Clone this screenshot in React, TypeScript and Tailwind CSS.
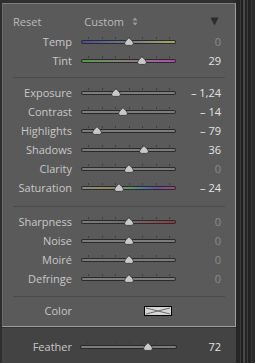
import React from "react";

type Row = {
  label: string;
  pos: number;
  value: string;
  dim?: boolean;
  fill?: string;
};

const TICKS = [7, 20.5, 34, 47.5, 61, 74.5, 88];

function Thumb({ left }: { left: number }) {
  return (
    <svg
      className="absolute top-[5px]"
      style={{ left: left - 5 }}
      width="10"
      height="9"
      viewBox="0 0 10 9"
    >
      <path
        d="M5 0.6 C6 2.2 9.4 4.4 9.4 6.4 Q9.4 8.4 7.4 8.4 H2.6 Q0.6 8.4 0.6 6.4 C0.6 4.4 4 2.2 5 0.6 Z"
        fill="#c9c9c9"
        stroke="#303030"
        strokeWidth="0.8"
      />
    </svg>
  );
}

function Slider({ pos, fill, width = 95 }: { pos: number; fill?: string; width?: number }) {
  return (
    <div className="relative h-[19px] shrink-0" style={{ width }}>
      {TICKS.map((t) => (
        <div key={t} className="absolute top-[5px] h-[2px] w-[1px] bg-[#3c3c3c]" style={{ left: (t * width) / 95 }} />
      ))}
      <div className="absolute left-0 right-0 top-[8px] h-[4px] rounded-full bg-[#2a2a2a] px-[1px] pt-[1px]">
        <div className={`h-[2px] rounded-full ${fill ?? "bg-[#7c7c7c]"}`} />
      </div>
      <Thumb left={pos} />
    </div>
  );
}

function SliderRow({ r }: { r: Row }) {
  return (
    <div className="flex h-[19px] items-center">
      <div className="w-[69px] shrink-0 text-right text-[11px] leading-none text-[#c8c8c8]">{r.label}</div>
      <div className="ml-[9px]">
        <Slider pos={r.pos} fill={r.fill} />
      </div>
      <div
        className={`w-[45px] shrink-0 text-right text-[11px] leading-none ${
          r.dim ? "text-[#8c8c8c]" : "text-[#e4e4e4]"
        }`}
      >
        {r.value}
      </div>
    </div>
  );
}

function Divider() {
  return <div className="ml-[10px] h-[1px] w-[212px] bg-[#4a4a4a]" />;
}

const wb: Row[] = [
  { label: "Temp", pos: 48, value: "0", dim: true, fill: "bg-linear-to-r from-[#4a4a9a] to-[#a8a85c]" },
  { label: "Tint", pos: 61, value: "29", fill: "bg-linear-to-r from-[#4f9a45] to-[#ae48ae]" },
];

const tone: Row[] = [
  { label: "Exposure", pos: 35, value: "\u2013 1,24" },
  { label: "Contrast", pos: 42, value: "\u2013 14" },
  { label: "Highlights", pos: 16, value: "\u2013 79" },
  { label: "Shadows", pos: 63, value: "36" },
  { label: "Clarity", pos: 48, value: "0", dim: true },
  {
    label: "Saturation",
    pos: 38,
    value: "\u2013 24",
    fill: "bg-[linear-gradient(to_right,#8a8a8a,#8c8a5a_30%,#5c9a6c_50%,#4c7aa4_65%,#6a4ca4_80%,#a84c6a)]",
  },
];

const detail: Row[] = [
  { label: "Sharpness", pos: 48, value: "0", dim: true, fill: "bg-linear-to-r from-[#7c7c7c] via-[#6c6c6c] to-[#8a3c3c]" },
  { label: "Noise", pos: 48, value: "0", dim: true },
  { label: "Moiré", pos: 48, value: "0", dim: true },
  { label: "Defringe", pos: 48, value: "0", dim: true },
];

export default function App() {
  return (
    <div className="flex h-[363px] w-[255px] overflow-hidden bg-[#2a2a2a] font-['Open_Sans','Noto_Sans',sans-serif]">
      <div className="h-full w-[2px] shrink-0 bg-[#2e2e2e]" />
      <div className="flex w-[234px] shrink-0 flex-col">
        <div className="h-[3px] shrink-0 bg-[#2e2e2e]" />
        <div className="flex shrink-0 flex-col border border-t-[#7e7e7e] border-l-[#6a6a6a] border-r-[#9c9c9c] border-b-[#9c9c9c] bg-[#5a5a5a] pb-[6px] pt-[8px]">
          {/* header */}
          <div className="flex h-[18px] items-center text-[11px] leading-none text-[#bababa]">
            <span className="ml-[10px]">Reset</span>
            <span className="ml-[43px]">Custom</span>
            <svg className="ml-[8px]" width="6" height="9" viewBox="0 0 6 9">
              <path d="M3 0.5 L5.5 3.5 H0.5 Z" fill="#9a9a9a" />
              <path d="M3 8.5 L5.5 5.5 H0.5 Z" fill="#9a9a9a" />
            </svg>
            <svg className="ml-[72px]" width="9" height="9" viewBox="0 0 9 9">
              <path d="M0.5 0.5 H8.5 L4.5 8.5 Z" fill="#2c2c2c" />
            </svg>
          </div>
          <div className="h-[2px]" />
          {wb.map((r) => (
            <SliderRow key={r.label} r={r} />
          ))}
          <div className="h-[7px]" />
          <Divider />
          <div className="h-[5px]" />
          {tone.map((r) => (
            <SliderRow key={r.label} r={r} />
          ))}
          <div className="h-[9px]" />
          <Divider />
          <div className="h-[5px]" />
          {detail.map((r) => (
            <SliderRow key={r.label} r={r} />
          ))}
          <div className="h-[8px]" />
          <Divider />
          <div className="h-[4px]" />
          <div className="flex h-[19px] items-center">
            <div className="w-[69px] shrink-0 text-right text-[11px] leading-none text-[#c8c8c8]">Color</div>
            <div className="ml-[72px] flex h-[10px] w-[28px] items-center justify-center border border-black bg-[#d6d6d6]">
              <svg width="26" height="8" viewBox="0 0 26 8">
                <path d="M1 1 L25 7 M1 7 L25 1" stroke="#6a6a6a" strokeWidth="1" />
              </svg>
            </div>
          </div>
        </div>
        <div className="h-[1px] shrink-0 bg-[#333333]" />
        <div className="flex flex-1 flex-col bg-[#434343] pt-[9px]">
          <div className="flex h-[19px] items-center">
            <div className="w-[70px] shrink-0 text-right text-[11px] leading-none text-[#c8c8c8]">Feather</div>
            <div className="ml-[8px]">
              <Slider pos={68} width={97} />
            </div>
            <div className="w-[44px] shrink-0 text-right text-[11px] leading-none text-[#e4e4e4]">72</div>
          </div>
        </div>
      </div>
      <div className="flex h-full flex-1">
        <div className="w-[4px] bg-[#262626]" />
        <div className="w-[1px] bg-[#3c3c3c]" />
        <div className="w-[2px] bg-[#1f1f1f]" />
        <div className="w-[2px] bg-[#474747]" />
        <div className="w-[2px] bg-[#262626]" />
        <div className="w-[1px] bg-[#3e3e3e]" />
        <div className="w-[3px] bg-[#222222]" />
        <div className="w-[1px] bg-[#383838]" />
        <div className="flex-1 bg-[#2a2a2a]" />
      </div>
    </div>
  );
}
